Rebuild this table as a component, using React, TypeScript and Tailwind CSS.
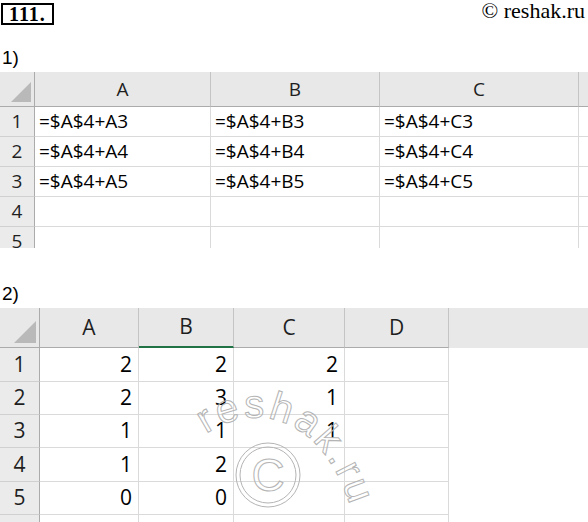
type Col = { label: string; w: string };

type SheetProps = {
    head: string;
    cols: Col[];
    headH: string;
    rowHs: string[];
    rows: string[][];
    text: string;
    headText: string;
    right?: boolean;
    selected?: number;
    tail?: boolean;
    corner: string;
};

function Corner({ size }: { size: string }) {
    return (
        <svg viewBox="0 0 20 20" className={size}>
            <polygon points="20,0 20,20 0,20" fill="#b9b9b9" />
        </svg>
    );
}

function Sheet({ head, cols, headH, rowHs, rows, text, headText, right, selected, tail, corner }: SheetProps) {
    return (
        <div className="flex flex-col">
            <div className={`flex ${headH} bg-[#e8e8e8]`}>
                <div className={`${head} shrink-0 flex items-end justify-end pr-[3px] pb-[4px] border-r border-b border-[#ababab]`}>
                    <Corner size={corner} />
                </div>
                {cols.map((c, i) => (
                    <div
                        key={c.label}
                        className={`${c.w} shrink-0 flex items-center justify-center ${headText} text-[#1f1f1f] border-r border-r-[#c4c4c4] ${
                            selected === i ? "border-b-2 border-b-[#217346]" : "border-b border-b-[#ababab]"
                        }`}
                    >
                        {c.label}
                    </div>
                ))}
                {tail && <div className="flex-1 border-b border-[#ababab]"></div>}
            </div>
            {rows.map((r, ri) => (
                <div key={ri} className={`flex ${rowHs[ri]}`}>
                    <div className={`${head} shrink-0 flex items-center justify-center bg-[#ebebeb] ${headText} text-[#1f1f1f] border-r border-r-[#ababab] border-b border-b-[#d0d0d0]`}>
                        {ri + 1}
                    </div>
                    {cols.map((c, ci) => (
                        <div
                            key={c.label}
                            className={`${c.w} shrink-0 flex items-center ${right ? "justify-end pr-[6px]" : "pl-[4px]"} ${text} text-black border-r border-b border-[#dadada]`}
                        >
                            {r[ci] ?? ""}
                        </div>
                    ))}
                    {tail && <div className="flex-1 border-b border-[#dadada]"></div>}
                </div>
            ))}
        </div>
    );
}

const formulas = [
    ["=$A$4+A3", "=$A$4+B3", "=$A$4+C3"],
    ["=$A$4+A4", "=$A$4+B4", "=$A$4+C4"],
    ["=$A$4+A5", "=$A$4+B5", "=$A$4+C5"],
    ["", "", ""],
    ["", "", ""],
];

const values = [
    ["2", "2", "2", ""],
    ["2", "3", "1", ""],
    ["1", "1", "1", ""],
    ["1", "2", "", ""],
    ["0", "0", "", ""],
    ["", "", "", ""],
];

function Watermark() {
    return (
        <svg className="absolute left-0 top-0 pointer-events-none" width="588" height="522" viewBox="0 0 588 522">
            <defs>
                <path id="arc" d="M 206 434 C 258 398, 332 418, 356 528" />
            </defs>
            <g fill="none" stroke="#b4b4b4" strokeWidth="1">
                <circle cx="268" cy="475" r="32" />
                <circle cx="268" cy="475" r="28" />
                <text x="268" y="491" textAnchor="middle" fontSize="46" fontFamily="Liberation Sans, Arial, sans-serif">
                    C
                </text>
                <text fontSize="40" fontFamily="Liberation Sans, Arial, sans-serif" letterSpacing="3">
                    <textPath href="#arc">reshak.ru</textPath>
                </text>
            </g>
        </svg>
    );
}

export default function App() {
    return (
        <div className="relative w-[588px] h-[522px] bg-white overflow-hidden font-['Open_Sans',sans-serif]">
            <div className="flex justify-between items-start h-[48px]">
                <div className="ml-[1px] mt-[3px] h-[22px] border-2 border-black px-[6px] flex items-center font-['Liberation_Serif',serif] font-bold text-[20px] leading-none tracking-[1px]">
                    111.
                </div>
                <div className="mr-[3px] font-['Liberation_Serif',serif] text-[22px] leading-[22px]">© reshak.ru</div>
            </div>
            <div className="h-[24px] pl-[2px] font-['Liberation_Sans',sans-serif] text-[19px] leading-[20px]">1)</div>
            <div className="h-[176px] overflow-hidden">
                <Sheet
                    head="w-[35px]"
                    cols={[
                        { label: "A", w: "w-[176px]" },
                        { label: "B", w: "w-[169px]" },
                        { label: "C", w: "w-[199px]" },
                    ]}
                    headH="h-[35px]"
                    rowHs={["h-[30px]", "h-[30px]", "h-[30px]", "h-[30px]", "h-[30px]"]}
                    rows={formulas}
                    text="text-[19px]"
                    headText="text-[19px]"
                    tail
                    corner="w-[20px] h-[20px]"
                />
            </div>
            <div className="h-[60px] flex items-end pb-[4px] pl-[2px] font-['Liberation_Sans',sans-serif] text-[19px] leading-[20px]">2)</div>
            <div className="h-[214px] overflow-hidden">
                <Sheet
                    head="w-[40px]"
                    cols={[
                        { label: "A", w: "w-[99px]" },
                        { label: "B", w: "w-[95px]" },
                        { label: "C", w: "w-[111px]" },
                        { label: "D", w: "w-[104px]" },
                    ]}
                    headH="h-[40px]"
                    rowHs={["h-[34px]", "h-[33px]", "h-[33px]", "h-[34px]", "h-[33px]", "h-[33px]"]}
                    rows={values}
                    text="text-[21px]"
                    headText="text-[21px]"
                    right
                    selected={1}
                    corner="w-[22px] h-[22px]"
                />
            </div>
            <Watermark />
        </div>
    );
}
